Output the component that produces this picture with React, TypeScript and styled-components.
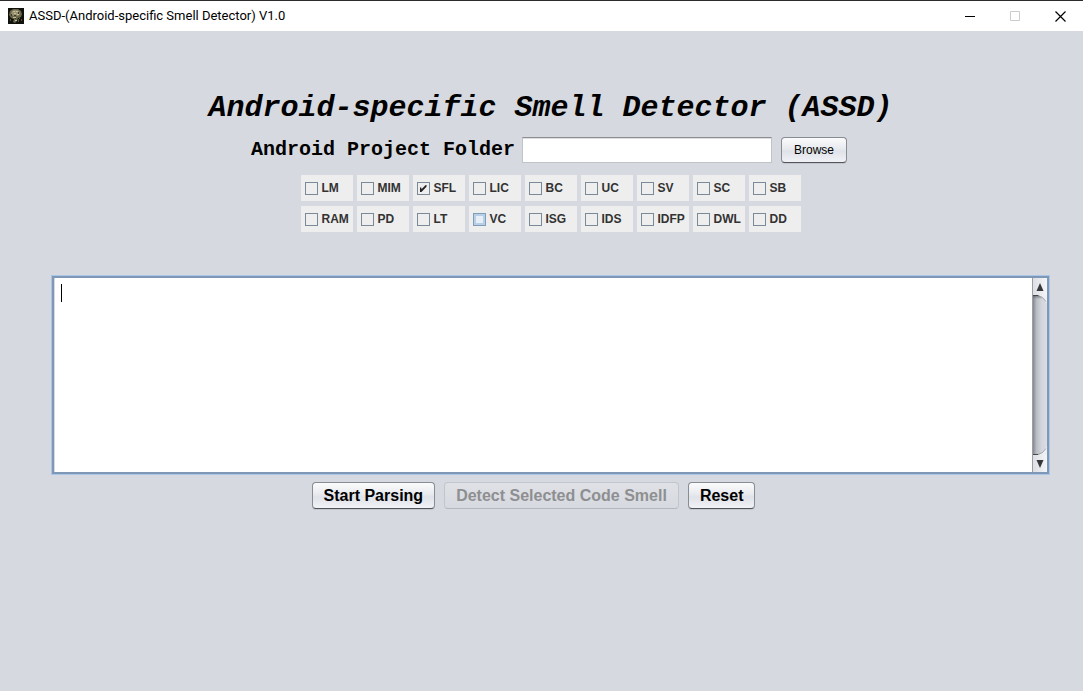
import React from "react";
import styled, { createGlobalStyle } from "styled-components";

const sans = `"Liberation Sans", Arial, sans-serif`;
const mono = `"Liberation Mono", "Courier New", monospace`;

const GlobalStyle = createGlobalStyle`
  *, *::before, *::after { box-sizing: border-box; }
  body { margin: 0; background: #d6d9df; color: #000; font-family: ${sans}; }
`;

const Window = styled.div`
  display: flex;
  flex-direction: column;
  min-height: 100vh;
  background: #d6d9df;
`;

const TitleBar = styled.header`
  display: flex;
  align-items: center;
  height: 31px;
  padding-left: 8px;
  border-top: 1px solid #2b2b2b;
  background: #fff;
`;

const WindowTitle = styled.span`
  flex: 1;
  margin-left: 5px;
  font: 13px/16px Roboto, sans-serif;
  white-space: nowrap;
`;

const WindowButton = styled.button`
  display: flex;
  align-items: center;
  justify-content: center;
  width: 45px;
  height: 30px;
  padding: 0;
  border: 0;
  background: none;
  color: #000;
  &:disabled { color: #ccc; }
`;

const Content = styled.main`
  display: flex;
  flex-direction: column;
  align-items: center;
  padding: 60px 34px 0 52px;
`;

const Heading = styled.h1`
  margin: 0;
  font: italic bold 30px/34px ${mono};
  white-space: nowrap;
`;

const FolderRow = styled.div`
  display: flex;
  align-items: center;
  margin-top: 12px;
  padding-right: 3px;
`;

const FolderLabel = styled.label`
  margin-right: 7px;
  font: bold 20px/24px ${mono};
  white-space: nowrap;
`;

const FolderInput = styled.input`
  width: 250px;
  height: 26px;
  margin-right: 9px;
  padding: 0 6px;
  border: 1px solid #c0c3c8;
  border-top-color: #8d8e8f;
  border-radius: 0;
  outline: 0;
  background: #fff;
  box-shadow: inset 0 1px 0 #dcdddf;
  font: 12px/16px ${sans};
`;

const Button = styled.button<{ $large?: boolean }>`
  height: ${(p) => (p.$large ? 27 : 26)}px;
  padding: 0 ${(p) => (p.$large ? 11 : 12)}px;
  border: 1px solid #888c93;
  border-bottom-color: #51555b;
  border-radius: 4px;
  background: linear-gradient(#fbfbfc, #e8eaee 45%, #dfe2e8 55%, #f0f2f6);
  box-shadow: 0 1px 0 #c3c6cc;
  color: #000;
  font: ${(p) => (p.$large ? "bold 16px/20px" : "12px/16px")} ${sans};
  white-space: nowrap;
  &:disabled {
    border-color: #c2c5ca;
    border-bottom-color: #b4b7bd;
    background: linear-gradient(#dfe1e6, #d6d9df);
    box-shadow: none;
    color: #8e8f91;
  }
`;

const SmellGrid = styled.fieldset`
  display: grid;
  grid-template-columns: repeat(9, 52px);
  gap: 5px 4px;
  margin: 12px 0 0;
  padding: 0;
  border: 0;
`;

const SmellOption = styled.label`
  display: flex;
  align-items: center;
  gap: 4px;
  height: 26px;
  padding-left: 4px;
  background: #eee;
  color: #333;
  font: bold 12px/16px ${sans};
`;

const Tick = styled.input<{ $hot?: boolean }>`
  display: grid;
  place-items: center;
  appearance: none;
  flex: none;
  width: 13px;
  height: 13px;
  margin: 1px 0 0;
  border: 1px solid ${(p) => (p.$hot ? "#7f9db9" : "#7a8a99")};
  background: ${(p) => (p.$hot ? "#e6eef8" : "#eee")};
  box-shadow: ${(p) => (p.$hot ? "inset 0 0 0 2px #b8cfe5" : "none")};
  &:checked::after {
    content: "";
    width: 7px;
    height: 7px;
    background: #222;
    clip-path: polygon(0 35%, 26% 35%, 28% 60%, 88% 0, 100% 0, 100% 25%, 28% 100%, 0 100%);
  }
`;

const OutputPane = styled.div`
  display: flex;
  align-self: stretch;
  height: 198px;
  margin-top: 44px;
  border: 2px solid #8098b8;
  box-shadow: 0 0 0 1px #a9c6e4;
  background: #fff;
`;

const OutputWrap = styled.div`
  position: relative;
  display: flex;
  flex: 1;
`;

const Output = styled.textarea`
  flex: 1;
  min-width: 0;
  padding: 6px;
  border: 0;
  border-left: 1px solid #d5d9df;
  outline: 0;
  resize: none;
  background: #fff;
  font: 16px/18px ${sans};
`;

const Caret = styled.span`
  position: absolute;
  top: 6px;
  left: 7px;
  width: 1px;
  height: 18px;
  background: #000;
`;

const ScrollBar = styled.div`
  display: flex;
  flex-direction: column;
  width: 15px;
  border-left: 1px solid #9a9da3;
`;

const ScrollButton = styled.button`
  display: flex;
  align-items: center;
  justify-content: center;
  height: 17px;
  padding: 0;
  border: 0;
  background: linear-gradient(90deg, #dcdfe4, #f4f5f8);
`;

const Track = styled.svg`
  flex: 1;
  width: 14px;
  min-height: 0;
`;

const Actions = styled.div`
  display: flex;
  gap: 9px;
  margin-top: 8px;
  padding-right: 34px;
`;

const smells = [
  "LM", "MIM", "SFL", "LIC", "BC", "UC", "SV", "SC", "SB",
  "RAM", "PD", "LT", "VC", "ISG", "IDS", "IDFP", "DWL", "DD",
];

function AppIcon() {
  return (
    <svg width="16" height="16" viewBox="0 0 16 16" aria-hidden="true">
      <rect width="16" height="16" fill="#11120c" />
      <path d="M2 3 5 1h5l3 2 1 3-1 3-3 1-1 3-2 2-2-1 1-3-3-1-2-3z" fill="#69664b" />
      <path d="M4 3 7 2l4 1 1 3-2 2-3-1-2 1-2-2z" fill="#96906f" />
      <path d="M5 3h2v1H5zM8 3h2v1H8zM6 5h2v1H6zM9 6h2v1H9zM5 9h3v1H5zM7 12h2v1H7z" fill="#c4bd99" />
      <path d="M3 6h1v2H3zM6 7h2v1H6zM10 4h1v2h-1zM7 10h1v1H7z" fill="#3b3926" />
      <path d="M11 9h1v2h-1v3h-1v-3h1zM13 11h1v2h-1zM2 11h1v2H2z" fill="#555239" />
    </svg>
  );
}

function ScrollTrack() {
  return (
    <Track viewBox="0 0 14 160" preserveAspectRatio="none" aria-hidden="true">
      <defs>
        <linearGradient id="groove">
          <stop offset="0" stopColor="#85888e" />
          <stop offset="0.25" stopColor="#b9bcc2" />
          <stop offset="0.6" stopColor="#d2d5db" />
          <stop offset="1" stopColor="#dadde3" />
        </linearGradient>
        <linearGradient id="shade" x1="0" y1="0" x2="0" y2="1">
          <stop offset="0" stopColor="#4c4e52" stopOpacity="0.7" />
          <stop offset="1" stopColor="#4c4e52" stopOpacity="0" />
        </linearGradient>
      </defs>
      <rect width="14" height="160" fill="#edeff3" />
      <path d="M0 0h5q6 2 9 9v142q-3 7-9 9H0z" fill="url(#groove)" />
      <path d="M0 0h5l5 4H0z" fill="url(#shade)" />
      <path d="M0 .5h5q5 1 8 6M0 159.500h5q5-1 8-6" fill="none" stroke="#6b6e74" strokeOpacity="0.5" />
      <path d="M0 .5h5M0 159.500h5" stroke="#45474b" />
    </Track>
  );
}

export default function App() {
  return (
    <Window>
      <GlobalStyle />
      <TitleBar>
        <AppIcon />
        <WindowTitle>ASSD-(Android-specific Smell Detector) V1.0</WindowTitle>
        <WindowButton aria-label="Minimize">
          <svg width="11" height="10"><path d="M0 5.500h10" stroke="currentColor" /></svg>
        </WindowButton>
        <WindowButton aria-label="Maximize" disabled>
          <svg width="11" height="11"><path d="M.5.5h9v9h-9z" fill="none" stroke="currentColor" /></svg>
        </WindowButton>
        <WindowButton aria-label="Close">
          <svg width="11" height="11"><path d="m.5.5 10 10m0-10-10 10" stroke="currentColor" strokeWidth="1.2" /></svg>
        </WindowButton>
      </TitleBar>
      <Content>
        <Heading>Android-specific Smell Detector (ASSD)</Heading>
        <FolderRow>
          <FolderLabel htmlFor="folder">Android Project Folder</FolderLabel>
          <FolderInput id="folder" type="text" />
          <Button type="button">Browse</Button>
        </FolderRow>
        <SmellGrid aria-label="Code smells">
          {smells.map((name) => (
            <SmellOption key={name}>
              <Tick type="checkbox" defaultChecked={name === "SFL"} $hot={name === "VC"} />
              {name}
            </SmellOption>
          ))}
        </SmellGrid>
        <OutputPane>
          <OutputWrap>
            <Output aria-label="Output" />
            <Caret />
          </OutputWrap>
          <ScrollBar>
            <ScrollButton type="button" aria-label="Scroll up">
              <svg width="8" height="8"><path d="M4 0 7.500 8h-7z" fill="#35373b" /></svg>
            </ScrollButton>
            <ScrollTrack />
            <ScrollButton type="button" aria-label="Scroll down">
              <svg width="8" height="8"><path d="M4 8 .5 0h7z" fill="#35373b" /></svg>
            </ScrollButton>
          </ScrollBar>
        </OutputPane>
        <Actions>
          <Button type="button" $large>Start Parsing</Button>
          <Button type="button" $large disabled>Detect Selected Code Smell</Button>
          <Button type="button" $large>Reset</Button>
        </Actions>
      </Content>
    </Window>
  );
}
